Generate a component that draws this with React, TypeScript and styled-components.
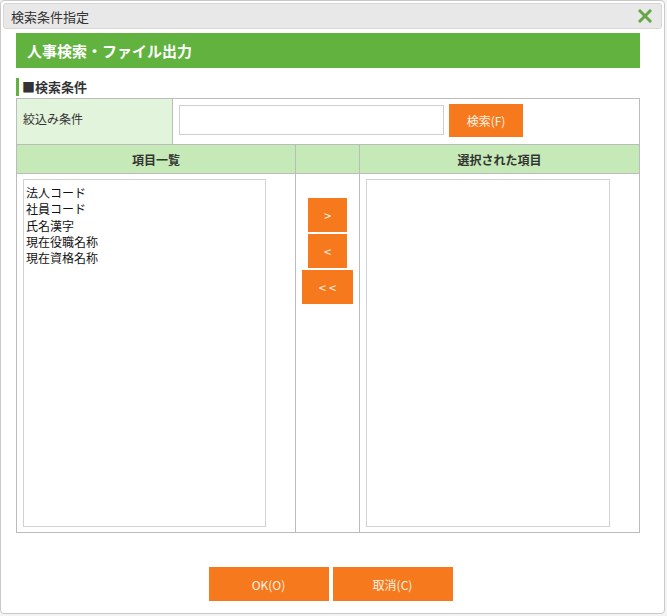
import styled, { createGlobalStyle } from "styled-components";

const GlobalStyle = createGlobalStyle`
  body {
    margin: 0;
    background: #f4f4f4;
    font-family: "Noto Sans CJK JP", "Liberation Sans", sans-serif;
    color: #333;
  }
`;

const Dialog = styled.div`
  box-sizing: border-box;
  width: 665px;
  height: 614px;
  background: #fff;
  border: 1px solid #c9c9c9;
  border-radius: 4px;
  padding: 2px 2px 0 2px;
  display: flex;
  flex-direction: column;
`;

const TitleBar = styled.div`
  box-sizing: border-box;
  height: 26px;
  background: #e8e8e8;
  border: 1px solid #d6d6d6;
  border-radius: 3px;
  padding: 0 8px 0 7px;
  display: flex;
  align-items: center;
  justify-content: space-between;
  font-size: 13px;
  color: #333;
`;

const CloseIcon = styled.svg`
  width: 14px;
  height: 14px;
  margin-right: 1px;
`;

const Body = styled.div`
  width: 624px;
  margin: 4px 0 0 13px;
  display: flex;
  flex-direction: column;
`;

const PageHeader = styled.div`
  height: 35px;
  background: #62b23f;
  color: #fff;
  font-size: 15px;
  font-weight: bold;
  padding-left: 11px;
  display: flex;
  align-items: center;
`;

const SectionLabel = styled.div`
  margin: 10px 0 2px;
  height: 18px;
  border-left: 3px solid #62b23f;
  padding-left: 3px;
  font-size: 13px;
  font-weight: bold;
  line-height: 18px;
`;

const Table = styled.div`
  border: 1px solid #bcbcbc;
`;

const FilterRow = styled.div`
  display: grid;
  grid-template-columns: 156px 1fr;
  height: 45px;
`;

const LabelCell = styled.div`
  background: #e3f4dc;
  border-right: 1px solid #bcbcbc;
  padding: 11px 6px 0;
  font-size: 12px;
`;

const ValueCell = styled.div`
  display: flex;
  align-items: flex-start;
  gap: 5px;
  padding: 5px 6px;
`;

const TextInput = styled.input`
  box-sizing: border-box;
  width: 265px;
  height: 30px;
  margin-top: 1px;
  border: 1px solid #cfcfcf;
  outline: none;
`;

const OrangeButton = styled.button<{ $w: number; $h?: number; $size?: number }>`
  box-sizing: border-box;
  width: ${(p) => p.$w}px;
  height: ${(p) => p.$h ?? 34}px;
  background: #f6791e;
  border: none;
  color: #fff2e2;
  font-family: "Noto Sans CJK JP", "Liberation Sans", sans-serif;
  font-size: ${(p) => p.$size ?? 12}px;
  padding: 0;
  cursor: pointer;
`;

const ListGrid = styled.div`
  display: grid;
  grid-template-columns: 279px 64px 1fr;
  border-top: 1px solid #bcbcbc;
`;

const HeadCell = styled.div<{ $last?: boolean }>`
  height: 28px;
  background: #c5eab7;
  border-bottom: 1px solid #bcbcbc;
  border-right: ${(p) => (p.$last ? "none" : "1px solid #bcbcbc")};
  display: flex;
  align-items: center;
  justify-content: center;
  font-size: 12px;
  font-weight: bold;
`;

const BodyCell = styled.div<{ $last?: boolean }>`
  height: 358px;
  box-sizing: border-box;
  padding: 5px 6px;
  border-right: ${(p) => (p.$last ? "none" : "1px solid #bcbcbc")};
`;

const ListBox = styled.div<{ $w: number }>`
  box-sizing: border-box;
  width: ${(p) => p.$w}px;
  height: 348px;
  border: 1px solid #d2d2d2;
  padding: 5px 2px;
  font-size: 12px;
  line-height: 16.3px;
  color: #111;
`;

const MoveButtons = styled.div`
  display: flex;
  flex-direction: column;
  align-items: center;
  gap: 2px;
  padding-top: 19px;
`;

const Footer = styled.div`
  display: flex;
  justify-content: center;
  gap: 4px;
  margin-top: 34px;
  margin-left: -4px;
`;

const fields = ["法人コード", "社員コード", "氏名漢字", "現在役職名称", "現在資格名称"];

export default function App() {
  return (
    <>
      <GlobalStyle />
      <Dialog>
        <TitleBar>
          <span>検索条件指定</span>
          <CloseIcon viewBox="0 0 14 14">
            <path d="M2 2 L12 12 M12 2 L2 12" stroke="#64a846" strokeWidth="3" strokeLinecap="square" fill="none" />
          </CloseIcon>
        </TitleBar>
        <Body>
          <PageHeader>人事検索・ファイル出力</PageHeader>
          <SectionLabel>■検索条件</SectionLabel>
          <Table>
            <FilterRow>
              <LabelCell>絞込み条件</LabelCell>
              <ValueCell>
                <TextInput />
                <OrangeButton $w={74} $h={33}>検索(F)</OrangeButton>
              </ValueCell>
            </FilterRow>
            <ListGrid>
              <HeadCell>項目一覧</HeadCell>
              <HeadCell />
              <HeadCell $last>選択された項目</HeadCell>
              <BodyCell>
                <ListBox $w={243}>
                  {fields.map((f) => (
                    <div key={f}>{f}</div>
                  ))}
                </ListBox>
              </BodyCell>
              <BodyCell>
                <MoveButtons>
                  <OrangeButton $w={39} $size={13}>&gt;</OrangeButton>
                  <OrangeButton $w={39} $size={13}>&lt;</OrangeButton>
                  <OrangeButton $w={51} $size={13}>&lt; &lt;</OrangeButton>
                </MoveButtons>
              </BodyCell>
              <BodyCell $last>
                <ListBox $w={244} />
              </BodyCell>
            </ListGrid>
          </Table>
        </Body>
        <Footer>
          <OrangeButton $w={120}>OK(O)</OrangeButton>
          <OrangeButton $w={120}>取消(C)</OrangeButton>
        </Footer>
      </Dialog>
    </>
  );
}
